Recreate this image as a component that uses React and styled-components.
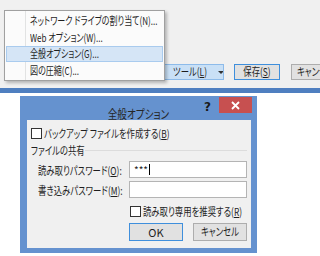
import styled, { createGlobalStyle } from "styled-components";

const Global = createGlobalStyle`
  html, body {
    margin: 0;
    padding: 0;
    background: #ffffff;
  }
  body {
    font-family: "Noto Sans CJK JP", "Noto Sans", sans-serif;
    font-feature-settings: "palt";
    font-size: 11px;
    color: #1e1e1e;
  }
`;

const menuItems = [
  "ネットワーク ドライブの割り当て(N)...",
  "Web オプション(W)...",
  "全般オプション(G)...",
  "図の圧縮(C)...",
];

const Key = ({ k }) => (
  <>
    (<u>{k}</u>)
  </>
);

const App = () => {
  return (
    <Page>
      <Global />
      <TopArea>
        <NavStrip>
          <NavIcon color="#e8a33a" />
          <NavIcon color="#6a8fc4" />
          <NavIcon color="#7d98bd" />
          <NavIcon color="#5b86c0" />
        </NavStrip>
        <ButtonRow>
          <ToolButton>
            <Txt>
              ツール<Key k="L" />
            </Txt>
            <Caret />
          </ToolButton>
          <PushButton $default $width={46}>
            <Txt $center>
              保存<Key k="S" />
            </Txt>
          </PushButton>
          <PushButton $width={50}>
            <Txt $center>キャンセル</Txt>
          </PushButton>
        </ButtonRow>
        <Menu>
          {menuItems.map((label, i) => (
            <MenuItem key={label} $active={i === 2}>
              <Txt $scale={0.73}>{label}</Txt>
            </MenuItem>
          ))}
        </Menu>
      </TopArea>
      <Band />
      <Lower>
        <Dialog>
          <TitleBar>
            <span />
            <Title>
              <Txt $center $scale={0.8}>
                全般オプション
              </Txt>
            </Title>
            <Controls>
              <Help>?</Help>
              <Close>
                <svg width="9" height="9" viewBox="0 0 9 9">
                  <path
                    d="M1 1 L8 8 M8 1 L1 8"
                    stroke="#ffffff"
                    strokeWidth="1.8"
                  />
                </svg>
              </Close>
            </Controls>
          </TitleBar>
          <Panel>
            <CheckRow>
              <Box />
              <Txt>
                バックアップ ファイルを作成する<Key k="B" />
              </Txt>
            </CheckRow>
            <GroupHeader>
              <Txt>ファイルの共有</Txt>
              <Rule />
            </GroupHeader>
            <FieldRow>
              <FieldLabel>
                <Txt>
                  読み取りパスワード<Key k="O" />:
                </Txt>
              </FieldLabel>
              <Input>
                ***<Cursor />
              </Input>
            </FieldRow>
            <FieldRow>
              <FieldLabel>
                <Txt>
                  書き込みパスワード<Key k="M" />:
                </Txt>
              </FieldLabel>
              <Input />
            </FieldRow>
            <CheckRow $indent $top={6}>
              <Box />
              <Txt>
                読み取り専用を推奨する<Key k="R" />
              </Txt>
            </CheckRow>
            <DialogButtons>
              <PushButton $default $width={54} $height={18}>
                OK
              </PushButton>
              <PushButton $width={54} $height={18}>
                <Txt $center>キャンセル</Txt>
              </PushButton>
            </DialogButtons>
          </Panel>
        </Dialog>
      </Lower>
    </Page>
  );
};

const Page = styled.div`
  width: 320px;
  height: 256px;
  overflow: hidden;
  display: flex;
  flex-direction: column;
  background: #ffffff;
`;

const Txt = styled.span`
  display: inline-block;
  white-space: nowrap;
  line-height: 1.2;
  transform: scaleX(${(p) => p.$scale || 0.76});
  transform-origin: ${(p) => (p.$center ? "center" : "left")} center;
`;

const TopArea = styled.div`
  position: relative;
  height: 88px;
  flex-shrink: 0;
  background: #f0f0f0;
  display: flex;
`;

const NavStrip = styled.div`
  width: 4px;
  padding-top: 17px;
  display: flex;
  flex-direction: column;
  gap: 9px;
  overflow: hidden;
`;

const NavIcon = styled.div`
  width: 4px;
  height: 7px;
  background: ${(p) => p.color};
`;

const ButtonRow = styled.div`
  display: flex;
  align-items: flex-start;
  padding: 64px 0 0 104px;
  gap: 10px;
`;

const ToolButton = styled.div`
  box-sizing: border-box;
  width: 120px;
  height: 16px;
  display: flex;
  align-items: center;
  justify-content: space-between;
  padding: 0 4px 0 68px;
  background: #c9e0f6;
  border: 1px solid #8dbbea;
  overflow: hidden;
`;

const Caret = styled.span`
  width: 0;
  height: 0;
  flex-shrink: 0;
  border-left: 3px solid transparent;
  border-right: 3px solid transparent;
  border-top: 3px solid #333333;
`;

const PushButton = styled.div`
  box-sizing: border-box;
  width: ${(p) => p.$width}px;
  height: ${(p) => p.$height || 16}px;
  flex-shrink: 0;
  display: flex;
  align-items: center;
  justify-content: center;
  background: #e1e1e1;
  border: 1px solid ${(p) => (p.$default ? "#3f8fdc" : "#adadad")};
  line-height: 1;
  white-space: nowrap;
  overflow: hidden;
  margin-left: ${(p) => (p.$default ? 0 : 1)}px;
`;

const Menu = styled.div`
  position: absolute;
  left: 4px;
  top: 10px;
  width: 161px;
  height: 71px;
  box-sizing: border-box;
  padding: 1px;
  display: flex;
  flex-direction: column;
  background: linear-gradient(
    to right,
    transparent 20px,
    #e2e3e3 20px,
    #e2e3e3 21px,
    transparent 21px
  ),
    #fbfbfb;
  border: 1px solid #a0a0a0;
  box-shadow: 2px 2px 3px rgba(0, 0, 0, 0.25);
`;

const MenuItem = styled.div`
  box-sizing: border-box;
  height: 17px;
  padding-left: 23px;
  display: flex;
  align-items: center;
  overflow: hidden;
  background: ${(p) => (p.$active ? "#d5e5f6" : "transparent")};
  border: 1px solid ${(p) => (p.$active ? "#a9cbee" : "transparent")};
`;

const Band = styled.div`
  height: 5px;
  flex-shrink: 0;
  background: #4f7fc0;
`;

const Lower = styled.div`
  flex: 1;
  padding: 3px 0 0 20px;
`;

const Dialog = styled.div`
  box-sizing: border-box;
  width: 237px;
  height: 157px;
  display: flex;
  flex-direction: column;
  background: #6592cf;
  padding: 0 6px 5px 7px;
`;

const TitleBar = styled.div`
  height: 24px;
  margin: 0 -6px 0 -7px;
  display: grid;
  grid-template-columns: 1fr auto 1fr;
`;

const Title = styled.div`
  padding-top: 9px;
  font-size: 12px;
  color: #262626;
`;

const Controls = styled.div`
  display: flex;
  justify-content: flex-end;
  align-items: flex-start;
  padding-right: 5px;
`;

const Help = styled.div`
  font-family: "DejaVu Sans", sans-serif;
  font-weight: bold;
  font-size: 12px;
  color: #1a1a1a;
  margin: 5px 8px 0 0;
  line-height: 1;
`;

const Close = styled.div`
  width: 33px;
  height: 16px;
  margin-top: 1px;
  background: #c75050;
  display: flex;
  align-items: center;
  justify-content: center;
`;

const Panel = styled.div`
  flex: 1;
  background: #f0f0f0;
  padding: 6px 4px 0 4px;
  display: flex;
  flex-direction: column;
`;

const CheckRow = styled.div`
  height: 15px;
  margin-top: ${(p) => p.$top || 0}px;
  margin-left: ${(p) => (p.$indent ? 99 : 0)}px;
  display: flex;
  align-items: center;
  gap: 2px;
`;

const Box = styled.div`
  box-sizing: border-box;
  width: 11px;
  height: 11px;
  flex-shrink: 0;
  background: #ffffff;
  border: 1px solid #333333;
`;

const GroupHeader = styled.div`
  height: 15px;
  margin-top: 2px;
  display: grid;
  grid-template-columns: 54px 1fr;
  align-items: center;
`;

const Rule = styled.div`
  height: 1px;
  background: #dcdcdc;
`;

const FieldRow = styled.div`
  display: grid;
  grid-template-columns: 98px 118px;
  align-items: center;
  margin-top: 3px;
`;

const FieldLabel = styled.div`
  padding-left: 7px;
  min-width: 0;
`;

const Input = styled.div`
  box-sizing: border-box;
  height: 17px;
  background: #ffffff;
  border: 1px solid #b4b4b4;
  padding-left: 4px;
  display: flex;
  align-items: center;
  font-size: 10px;
  line-height: 1;
`;

const Cursor = styled.span`
  width: 1px;
  height: 11px;
  margin-left: 1px;
  background: #000000;
`;

const DialogButtons = styled.div`
  display: flex;
  gap: 9px;
  margin: 4px 0 0 98px;
`;

export default App;
